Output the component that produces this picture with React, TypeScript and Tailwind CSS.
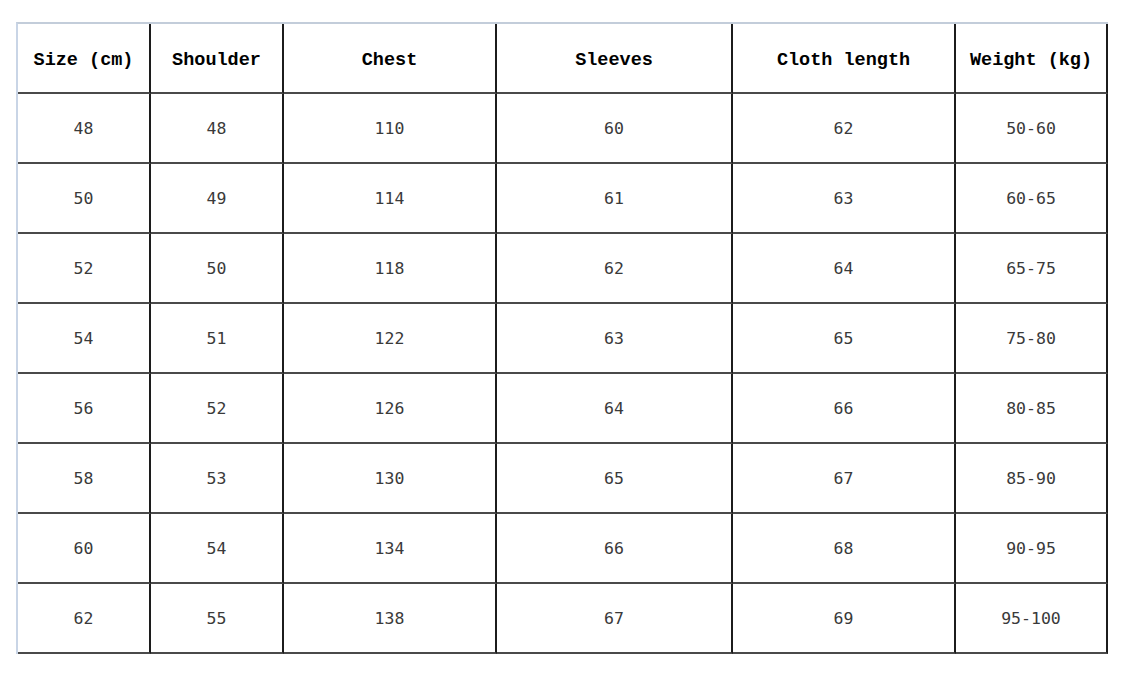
import React from "react";

const headers = ["Size (cm)", "Shoulder", "Chest", "Sleeves", "Cloth length", "Weight (kg)"];

const rows = [
  ["48", "48", "110", "60", "62", "50-60"],
  ["50", "49", "114", "61", "63", "60-65"],
  ["52", "50", "118", "62", "64", "65-75"],
  ["54", "51", "122", "63", "65", "75-80"],
  ["56", "52", "126", "64", "66", "80-85"],
  ["58", "53", "130", "65", "67", "85-90"],
  ["60", "54", "134", "66", "68", "90-95"],
  ["62", "55", "138", "67", "69", "95-100"],
];

export default function App() {
  return (
    <div className="w-[1122px] h-[675px] bg-white pl-[16px] pt-[22px]">
      {/* size chart */}
      <div className="grid w-[1092px] grid-cols-[133px_133px_213px_236px_223px_152px] border-l-2 border-t-2 border-l-[#c9d5e6] border-t-[#c3cdda]">
        {headers.map((h) => (
          <div
            key={h}
            className="h-[70px] pt-[5px] flex items-center justify-center border-r-2 border-b-2 border-r-[#1c1c1c] border-b-[#4a4a4a] text-[18.5px] font-bold text-black"
            style={{ fontFamily: '"Liberation Mono", "DejaVu Sans Mono", monospace' }}
          >
            {h}
          </div>
        ))}
        {rows.map((r, i) =>
          r.map((v, j) => (
            <div
              key={`${i}-${j}`}
              className="h-[70px] pt-[3px] flex items-center justify-center border-r-2 border-b-2 border-r-[#1c1c1c] border-b-[#4a4a4a] text-[16.5px] text-[#3a3a3a]"
              style={{ fontFamily: '"DejaVu Sans Mono", "Liberation Mono", monospace' }}
            >
              {v}
            </div>
          ))
        )}
      </div>
    </div>
  );
}
